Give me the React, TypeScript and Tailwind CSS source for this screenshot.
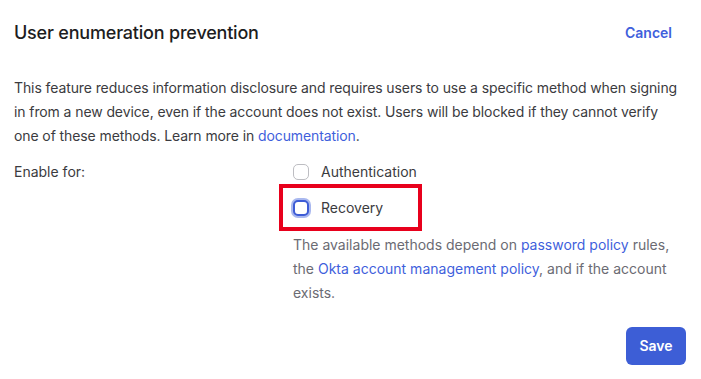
export default function App() {
  return (
    <div className="w-[701px] h-[379px] bg-white pl-[14px] pr-[15px] font-['Inter',sans-serif] text-[14px] leading-[24px] text-[#3b3b40]">
      {/* Header */}
      <div className="flex items-center justify-between pt-[21px]">
        <h2 className="text-[18px] leading-[24px] font-medium tracking-[-0.2px] text-[#1d1d21]">User enumeration prevention</h2>
        <button className="px-[14px] text-[14px] font-semibold text-[#3f5fdc]">Cancel</button>
      </div>

      <p className="mt-[31px] tracking-[-0.1px]">
        This feature reduces information disclosure and requires users to use a specific method when signing in
        from a new device, even if the account does not exist. Users will be blocked if they cannot verify one of
        these methods. Learn more in <a className="text-[#3f5fdc]">documentation</a>.
      </p>

      {/* Enable for */}
      <div className="mt-[12px] grid grid-cols-[279px_1fr]">
        <div>Enable for:</div>
        <div>
          <label className="flex items-center gap-[12px]">
            <span className="w-[16px] h-[16px] rounded-[5px] border-[1.5px] border-[#bdbdc2] bg-white" />
            <span>Authentication</span>
          </label>
          <div className="relative mt-[12px]">
            <label className="flex items-center gap-[12px]">
              <span className="w-[16px] h-[16px] rounded-[5px] border-2 border-[#3d5cd6] bg-white ring-2 ring-[#a9b8ef]" />
              <span>Recovery</span>
            </label>
            <div className="absolute left-[-14px] top-[-12px] w-[143px] h-[47px] border-4 border-[#e8001c]" />
          </div>
          <p className="mt-[13px] text-[#6b6b73]">
            The available methods depend on <a className="text-[#3f5fdc]">password policy</a> rules, the{" "}
            <a className="text-[#3f5fdc]">Okta account management policy</a>, and if the account exists.
          </p>
        </div>
      </div>

      <div className="mt-[22px] flex justify-end">
        <button className="h-[38px] w-[60px] rounded-[6px] bg-[#3d5ed6] text-[14px] font-semibold text-white">
          Save
        </button>
      </div>
    </div>
  )
}
